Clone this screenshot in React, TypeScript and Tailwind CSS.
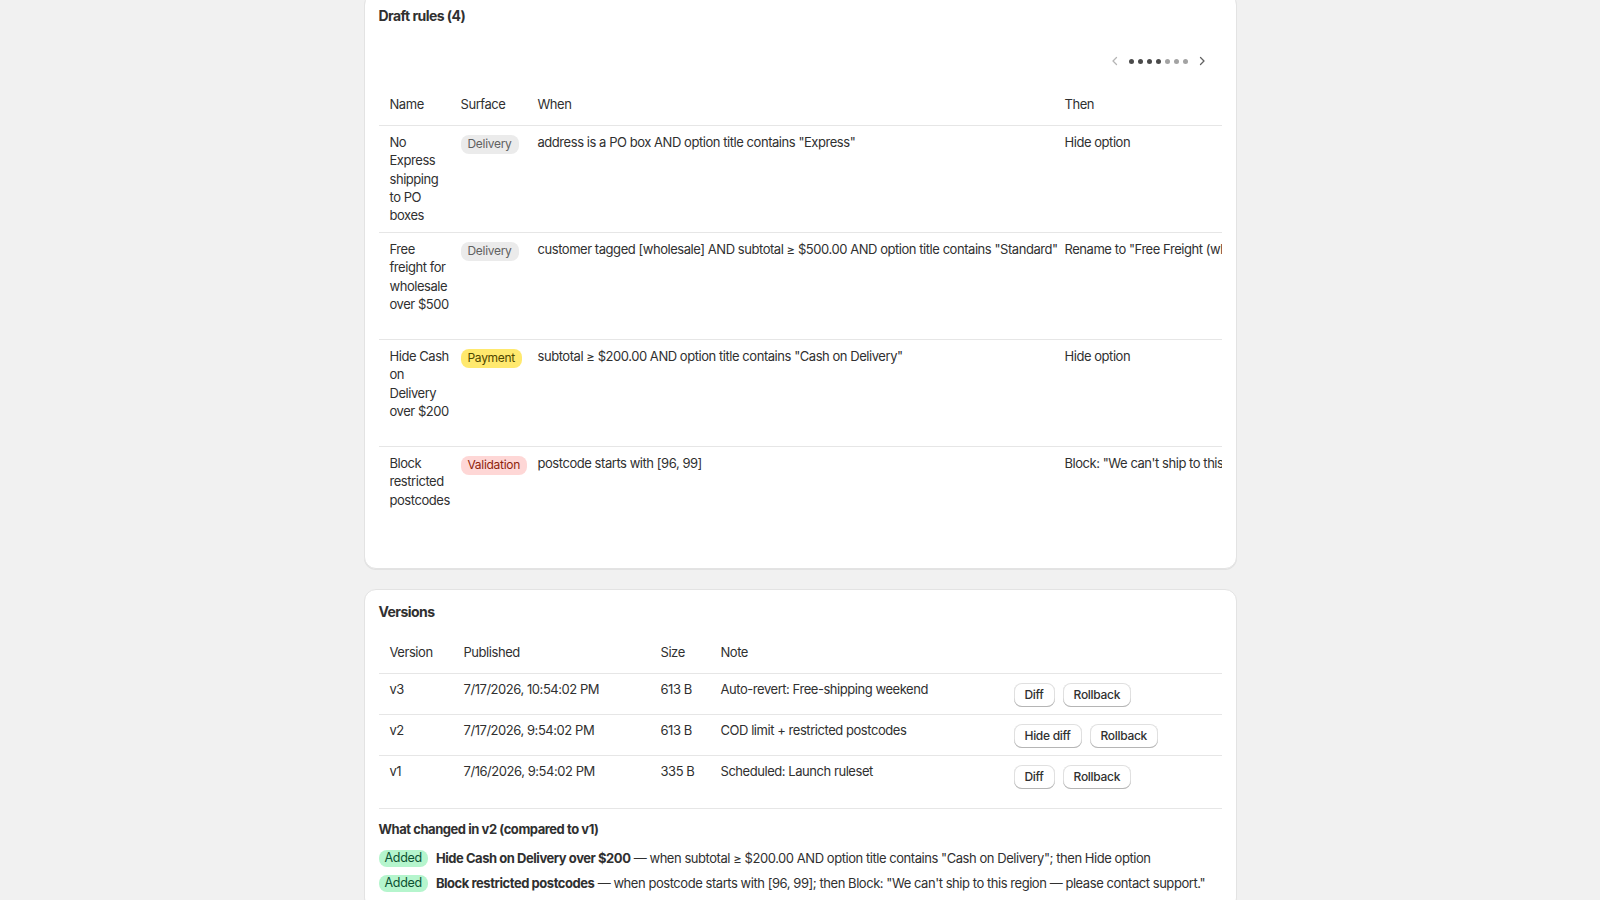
import React from "react";

type Draft = { name: string; surface: "Delivery" | "Payment" | "Validation"; when: string; then: string };

const drafts: Draft[] = [
  { name: "No Express shipping to PO boxes", surface: "Delivery", when: 'address is a PO box AND option title contains "Express"', then: "Hide option" },
  { name: "Free freight for wholesale over $500", surface: "Delivery", when: 'customer tagged [wholesale] AND subtotal ≥ $500.00 AND option title contains "Standard"', then: 'Rename to "Free Freight (wholesale)"' },
  { name: "Hide Cash on Delivery over $200", surface: "Payment", when: 'subtotal ≥ $200.00 AND option title contains "Cash on Delivery"', then: "Hide option" },
  { name: "Block restricted postcodes", surface: "Validation", when: "postcode starts with [96, 99]", then: 'Block: "We can\'t ship to this region — please contact support."' },
];

const versions = [
  { v: "v3", published: "7/17/2026, 10:54:02 PM", size: "613 B", note: "Auto-revert: Free-shipping weekend", diff: "Diff" },
  { v: "v2", published: "7/17/2026, 9:54:02 PM", size: "613 B", note: "COD limit + restricted postcodes", diff: "Hide diff" },
  { v: "v1", published: "7/16/2026, 9:54:02 PM", size: "335 B", note: "Scheduled: Launch ruleset", diff: "Diff" },
];

function SurfaceBadge({ s }: { s: Draft["surface"] }) {
  const cls =
    s === "Delivery"
      ? "bg-[#ebebeb] text-[#616161]"
      : s === "Payment"
      ? "bg-[#ffe96e] text-[#4f4700]"
      : "bg-[#fed7d6] text-[#8e1f0b]";
  return (
    <span className={`inline-flex h-[19px] items-center rounded-[8px] px-[7px] text-[12px] leading-none tracking-[-0.3px] ${cls}`}>{s}</span>
  );
}

function Btn({ children }: { children: React.ReactNode }) {
  return (
    <button className="h-[24px] rounded-[8px] bg-white px-[11px] text-[12px] font-[550] leading-none tracking-[-0.3px] text-[#303030] shadow-[inset_0_-1px_0_0_#b5b5b5,inset_0_0_0_1px_rgba(0,0,0,0.12)]">
      {children}
    </button>
  );
}

function Chevron({ dir, color }: { dir: "left" | "right"; color: string }) {
  return (
    <svg width="12" height="12" viewBox="0 0 12 12" fill="none">
      {dir === "left" ? (
        <path d="M7.5 2.5L4 6l3.5 3.5" stroke={color} strokeWidth="1.3" strokeLinecap="round" strokeLinejoin="round" />
      ) : (
        <path d="M4.5 2.5L8 6l-3.5 3.5" stroke={color} strokeWidth="1.3" strokeLinecap="round" strokeLinejoin="round" />
      )}
    </svg>
  );
}

const draftCols = "grid grid-cols-[82px_77px_527px_minmax(0,1fr)]";
const verCols = "grid grid-cols-[85px_197px_60px_293px_minmax(0,1fr)]";

export default function App() {
  return (
    <div className="min-h-screen bg-[#f1f1f1] font-['Inter','Liberation_Sans',sans-serif] text-[13px] leading-[1.4] tracking-[-0.45px] text-[#303030]">
      <div className="mx-auto -mt-[7px] flex w-[873px] flex-col gap-[20px] pb-10">
        {/* Draft rules card */}
        <div className="rounded-[12px] border border-[#e3e3e3] bg-white px-[14px] pb-[14px] pt-[12px] shadow-[0_1px_0_0_rgba(26,26,26,0.07)]">
          <h2 className="text-[14px] font-[650] leading-[20px] tracking-[-0.55px]">Draft rules (4)</h2>
          <div className="mt-[21px] flex h-[28px] items-center justify-end pr-[6px]">
            <button className="flex h-[28px] w-[28px] items-center justify-center">
              <Chevron dir="left" color="#b5b5b5" />
            </button>
            <div className="flex items-center gap-[4px]">
              {[0, 1, 2, 3, 4, 5, 6].map((i) => (
                <span key={i} className={`h-[5px] w-[5px] rounded-full ${i < 4 ? "bg-[#4a4a4a]" : "bg-[#a3a3a3]"}`} />
              ))}
            </div>
            <button className="flex h-[28px] w-[28px] items-center justify-center">
              <Chevron dir="right" color="#616161" />
            </button>
          </div>
          <div className="mt-[8px] overflow-hidden">
            <div className={`${draftCols} border-b border-[#e6e6e6] py-[12px]`}>
              <div className="pl-[11px]">Name</div>
              <div>Surface</div>
              <div>When</div>
              <div className="whitespace-nowrap">Then</div>
            </div>
            {drafts.map((d, i) => (
              <div
                key={d.name}
                className={`${draftCols} h-[107px] pb-[8px] pt-[7px] ${i < drafts.length - 1 ? "border-b border-[#e6e6e6]" : ""}`}
              >
                <div className="pl-[11px]">
                  <div className="w-[61px]">{d.name}</div>
                </div>
                <div className="pt-[1px]">
                  <SurfaceBadge s={d.surface} />
                </div>
                <div className="whitespace-nowrap pr-[8px]">{d.when}</div>
                <div className="overflow-hidden whitespace-nowrap">{d.then}</div>
              </div>
            ))}
          </div>
        </div>

        {/* Versions card */}
        <div className="rounded-[12px] border border-[#e3e3e3] bg-white px-[14px] pb-[16px] pt-[12px] shadow-[0_1px_0_0_rgba(26,26,26,0.07)]">
          <h2 className="text-[14px] font-[650] leading-[20px] tracking-[-0.55px]">Versions</h2>
          <div className="mt-[9px]">
            <div className={`${verCols} border-b border-[#e6e6e6] py-[12px]`}>
              <div className="pl-[11px]">Version</div>
              <div>Published</div>
              <div>Size</div>
              <div>Note</div>
              <div />
            </div>
            {versions.map((v, i) => (
              <div
                key={v.v}
                className={`${verCols} h-[41px] pt-[6px] ${i < versions.length - 1 ? "border-b border-[#e6e6e6]" : ""}`}
              >
                <div className="pl-[11px]">{v.v}</div>
                <div>{v.published}</div>
                <div>{v.size}</div>
                <div>{v.note}</div>
                <div className="flex gap-[8px] pt-[3px]">
                  <Btn>{v.diff}</Btn>
                  <Btn>Rollback</Btn>
                </div>
              </div>
            ))}
          </div>
          <div className="mt-[11px] border-t border-[#e6e6e6] pt-[10px]">
            <h3 className="text-[13px] font-[650] leading-[20px] tracking-[-0.45px]">What changed in v2 (compared to v1)</h3>
            <div className="mt-[9px] flex flex-col gap-[5px]">
              <div className="flex h-[20px] items-center gap-[8px] whitespace-nowrap">
                <span className="inline-flex h-[17px] items-center rounded-[8px] bg-[#b5f5cd] px-[6px] text-[12.5px] leading-none tracking-[-0.3px] text-[#0c5132]">Added</span>
                <span>
                  <span className="font-[650]">Hide Cash on Delivery over $200</span> — when subtotal ≥ $200.00 AND option title contains "Cash on Delivery"; then Hide option
                </span>
              </div>
              <div className="flex h-[20px] items-center gap-[8px] whitespace-nowrap">
                <span className="inline-flex h-[17px] items-center rounded-[8px] bg-[#b5f5cd] px-[6px] text-[12.5px] leading-none tracking-[-0.3px] text-[#0c5132]">Added</span>
                <span>
                  <span className="font-[650]">Block restricted postcodes</span> — when postcode starts with [96, 99]; then Block: "We can't ship to this region — please contact support."
                </span>
              </div>
            </div>
          </div>
        </div>
      </div>
    </div>
  );
}
